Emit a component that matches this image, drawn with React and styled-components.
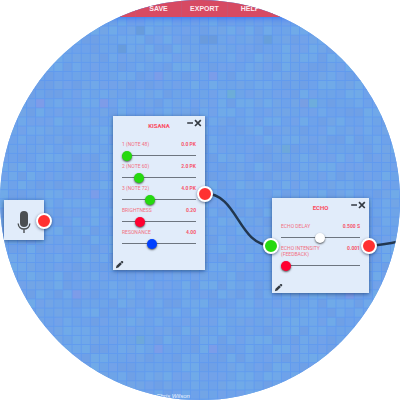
import React from "react";
import styled, { createGlobalStyle } from "styled-components";

const GlobalStyle = createGlobalStyle`
  *, *::before, *::after { box-sizing: border-box; }
  html, body { margin: 0; background: #fff; }
  body { font-family: "Liberation Sans", Arial, sans-serif; }
`;

const Stage = styled.main`
  position: relative;
  display: flex;
  flex-direction: column;
  width: 100%;
  aspect-ratio: 1;
  overflow: hidden;
  border-radius: 50%;
  background: #6ea4e9;
`;

const Layer = styled.svg`
  position: absolute;
  inset: 0;
  width: 100%;
  height: 100%;
  pointer-events: none;
`;

const Toolbar = styled.nav`
  position: relative;
  display: flex;
  justify-content: center;
  height: 17px;
  padding-left: 8px;
  background: #d74a63;
  box-shadow: 0 1px 7px rgba(50, 110, 245, 0.9);
`;

const ToolButton = styled.button`
  width: 46px;
  padding: 0;
  border: 0;
  border-left: 1px solid #c95270;
  background: none;
  color: #fbeaf0;
  font: bold 7px/16px "Liberation Sans", Arial, sans-serif;
  text-transform: uppercase;

  &:last-child { border-right: 1px solid #c95270; }
`;

const Canvas = styled.section`
  flex: 1;
`;

const Card = styled.article`
  position: absolute;
  left: ${(p) => p.$x}px;
  top: ${(p) => p.$y}px;
  width: ${(p) => p.$w}px;
  background: #e1ecfa;
  box-shadow: 0 1px 4px rgba(20, 50, 100, 0.65);
`;

const ModuleCard = styled(Card)`
  display: flex;
  flex-direction: column;
  padding: 6px 9px ${(p) => p.$foot}px;
`;

const MicCard = styled(Card)`
  display: flex;
  align-items: center;
  justify-content: center;
  height: 40px;
  padding-top: 3px;
`;

const Title = styled.h2`
  margin: 0 0 12px;
  color: #fb4a5e;
  font: bold 6px/7px Roboto, sans-serif;
  text-align: center;
  text-transform: uppercase;
`;

const WindowButtons = styled.div`
  position: absolute;
  top: 3px;
  right: 3px;
  display: flex;
`;

const IconButton = styled.button`
  display: flex;
  padding: 0;
  border: 0;
  background: none;
  color: #333a42;
`;

const EditButton = styled(IconButton)`
  position: absolute;
  left: 2px;
  bottom: 1px;
`;

const Row = styled.div`
  display: grid;
  grid-template-columns: 1fr auto;
  column-gap: 6px;
  row-gap: 3px;
  padding-bottom: 2px;
  color: #f26f82;
  font: 5px/6px Roboto, sans-serif;
  text-transform: uppercase;
`;

const Value = styled.output`
  color: #f6566b;
  font-weight: bold;
`;

const Slider = styled.input`
  grid-column: 1 / -1;
  width: 100%;
  height: 11px;
  margin: 0;
  appearance: none;
  background: linear-gradient(#6d757f, #6d757f) center / 100% 1px no-repeat;

  &::-webkit-slider-thumb {
    appearance: none;
    width: 10px;
    height: 10px;
    border-radius: 50%;
    background: ${(p) => p.$color};
    box-shadow: 0 1px 2px rgba(0, 0, 0, 0.65);
  }
`;

const Port = styled.button`
  position: absolute;
  left: ${(p) => p.$x - 8}px;
  top: ${(p) => p.$y - 8}px;
  width: 16px;
  height: 16px;
  padding: 0;
  border: 2px solid #fff;
  border-radius: 50%;
  background: ${(p) => p.$color};
  box-shadow: 0 1px 3px rgba(20, 40, 80, 0.6);
`;

const Credit = styled.footer`
  position: relative;
  align-self: center;
  padding-right: 54px;
  color: #eaf3ff;
  font: italic 6px/7px "Liberation Sans", Arial, sans-serif;
`;

const TONES = ["#6ea4e8", "#70a8e9", "#72a2e9", "#70aae8", "#6fa0e6", "#6ea2ea", "#72a5e6"];
const ACCENTS = {
  "12,4": "#689cdb", "14,2": "#689cdb", "21,3": "#6a9bdc", "22,3": "#6a9bdc", "28,3": "#689fda",
  "3,10": "#7e9ce8", "10,10": "#7e9ce8", "16,7": "#7b9de9", "22,7": "#7b9de9", "32,10": "#789fe3",
  "7,31": "#7d9ce8", "37,31": "#7d9ce8", "16,37": "#7b9de9", "22,37": "#7b9de9", "24,9": "#6dadd8",
  "33,10": "#6eaddc", "14,36": "#6ea8da", "30,15": "#6ea8da", "9,20": "#7b9de9",
};
const CELL = 9.1;
const COLS = 46;

function buildCells() {
  const paths = {};
  let seed = 41;
  for (let r = -1; r < COLS; r += 1) {
    for (let c = -1; c < COLS; c += 1) {
      seed = (seed * 16807) % 2147483647;
      const tone = ACCENTS[`${c},${r}`] || TONES[seed % TONES.length];
      const x = (8.4 + c * CELL).toFixed(1);
      const y = (7.8 + r * CELL).toFixed(1);
      paths[tone] = `${paths[tone] || ""}M${x} ${y}h9.1v9.1h-9.1z`;
    }
  }
  return Object.entries(paths);
}

const CELLS = buildCells();

function Mosaic() {
  return (
    <Layer aria-hidden="true">
      <defs>
        <pattern id="grid" x="7.9" y="7.3" width={CELL} height={CELL} patternUnits="userSpaceOnUse">
          <path d="M.5 0V9.1M0 .5H9.1" stroke="#5794f4" strokeWidth="1" opacity=".6" />
        </pattern>
      </defs>
      {CELLS.map(([tone, d]) => <path key={tone} d={d} fill={tone} />)}
      <rect width="100%" height="100%" fill="url(#grid)" />
    </Layer>
  );
}

function Cables() {
  return (
    <Layer aria-hidden="true" fill="none" stroke="#22374f" strokeWidth="2.5">
      <path d="M205 193.5C238 193.5 238 245.5 271.5 245.5" />
      <path d="M369 245.5C386 245.5 392 243 410 239" />
    </Layer>
  );
}

function Pencil() {
  return (
    <svg width="9" height="9" viewBox="0 0 9 9" fill="currentColor" aria-hidden="true">
      <path d="M.9 8.2 1.5 5.8 5.2 2.3 6.9 4 3.4 7.5zM5.6 1.9 6.5 1.1Q7.2.7 7.9 1.3T8.1 2.7L7.3 3.6z" />
    </svg>
  );
}

function Module({ title, x, y, w, foot, params }) {
  return (
    <ModuleCard $x={x} $y={y} $w={w} $foot={foot}>
      <Title>{title}</Title>
      <WindowButtons>
        <IconButton aria-label={`Collapse ${title}`}>
          <svg width="8" height="8" viewBox="0 0 8 8"><path d="M1.2 4H7" stroke="currentColor" strokeWidth="1.5" /></svg>
        </IconButton>
        <IconButton aria-label={`Close ${title}`}>
          <svg width="8" height="8" viewBox="0 0 8 8"><path d="M1 1.2 6.8 7M6.8 1.2 1 7" stroke="currentColor" strokeWidth="1.7" /></svg>
        </IconButton>
      </WindowButtons>
      {params.map(({ label, value, level, color }, i) => {
        const id = `${title}-${i}`;
        return (
          <Row key={id}>
            <label htmlFor={id}>{label}</label>
            <Value htmlFor={id}>{value}</Value>
            <Slider id={id} type="range" min="0" max="100" defaultValue={level} $color={color} />
          </Row>
        );
      })}
      <EditButton aria-label={`Edit ${title}`}><Pencil /></EditButton>
    </ModuleCard>
  );
}

const GREEN = "#25d90f";
const RED = "#ff0030";
const PORT_RED = "#ff3131";

const KISANA = [
  { label: "1 (Note 48)", value: "0.0 PK", level: 0, color: GREEN },
  { label: "2 (Note 60)", value: "2.0 PK", level: 18, color: GREEN },
  { label: "3 (Note 72)", value: "4.0 PK", level: 36, color: GREEN },
  { label: "Brightness", value: "0.20", level: 20, color: RED },
  { label: "Resonance", value: "4.00", level: 39, color: "#0040ff" },
];

const ECHO = [
  { label: "Echo Delay", value: "0.500 s", level: 49, color: "#fff" },
  { label: "Echo Intensity (Feedback)", value: "0.001", level: 0, color: RED },
];

export default function App() {
  return (
    <>
      <GlobalStyle />
      <Stage>
        <Mosaic />
        <Toolbar>
          <ToolButton>Save</ToolButton>
          <ToolButton>Export</ToolButton>
          <ToolButton>Help</ToolButton>
        </Toolbar>
        <Canvas>
          <MicCard $x={4} $y={200} $w={40}>
            <svg width="14" height="22" viewBox="0 0 14 22" role="img" aria-label="Microphone">
              <rect x="3" y="0" width="8" height="16" rx="4" fill="#4b4f52" />
              <path d="M1.2 12.5C1.4 19.8 12.6 19.8 12.8 12.5M7 17.5V22" fill="none" stroke="#4b4f52" strokeWidth="1.4" />
            </svg>
          </MicCard>
          <Module title="Kisana" x={113} y={116} w={92} foot={19} params={KISANA} />
          <Module title="Echo" x={272} y={198} w={97} foot={20} params={ECHO} />
          <Cables />
          <Port aria-label="Microphone output" $x={44} $y={221} $color={PORT_RED} />
          <Port aria-label="Kisana output" $x={205} $y={194} $color={PORT_RED} />
          <Port aria-label="Echo input" $x={271} $y={246} $color={GREEN} />
          <Port aria-label="Echo output" $x={369} $y={246} $color={PORT_RED} />
        </Canvas>
        <Credit>Chris Wilson</Credit>
      </Stage>
    </>
  );
}
